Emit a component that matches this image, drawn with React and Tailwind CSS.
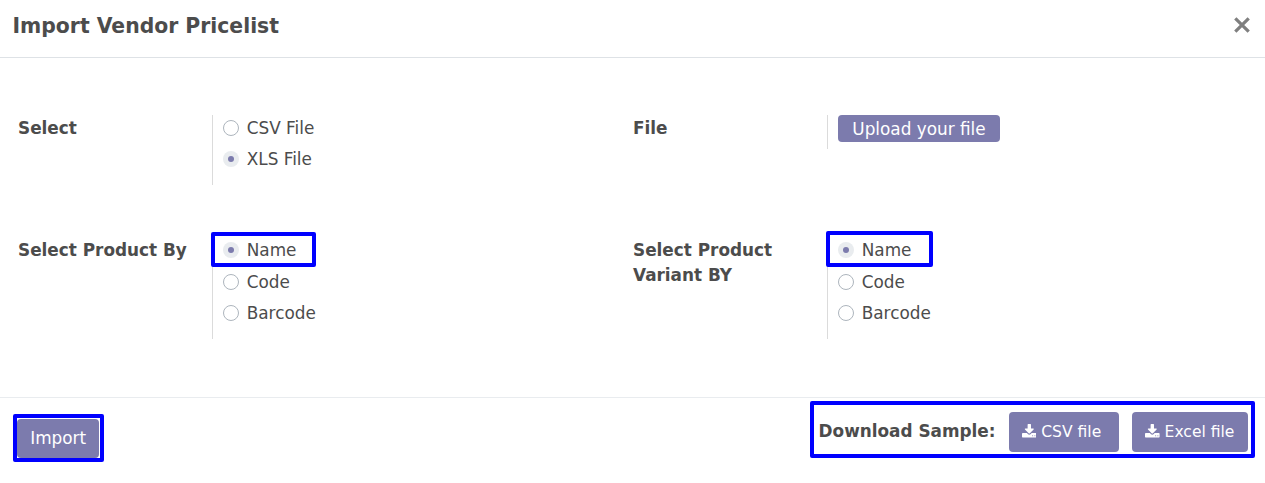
import React from "react";

function DownloadIcon() {
  return (
    <svg viewBox="0 0 1664 1536" className="-mt-[4px] h-[13.5px] w-[14.6px] shrink-0 fill-white">
      <path d="M1280 1344q0-26-19-45t-45-19-45 19-19 45 19 45 45 19 45-19 19-45zm256 0q0-26-19-45t-45-19-45 19-19 45 19 45 45 19 45-19 19-45zm128-224v320q0 40-28 68t-68 28h-1472q-40 0-68-28t-28-68v-320q0-40 28-68t68-28h465l135 136q58 56 136 56t136-56l136-136h464q40 0 68 28t28 68zm-325-569q17 41-14 70l-448 448q-18 19-45 19t-45-19l-448-448q-31-29-14-70 17-39 59-39h256v-448q0-26 19-45t45-19h256q26 0 45 19t19 45v448h256q42 0 59 39z" />
    </svg>
  );
}

function Radio({ checked }) {
  return checked ? (
    <span className="flex size-4 shrink-0 items-center justify-center rounded-full bg-[#e9ecef]">
      <span className="size-[6px] rounded-full bg-[#7c7bad]" />
    </span>
  ) : (
    <span className="block size-4 shrink-0 rounded-full border border-[#adb5bd] bg-white" />
  );
}

function RadioGroup({ options, selected, highlight }) {
  return (
    <div className="relative border-l border-[#dbdbdb] pb-[7px] pl-[10px]">
      {options.map((option) => (
        <div key={option} className="flex h-[31.5px] items-start gap-[7.7px]">
          <span className={highlight ? "pt-[5px]" : "pt-[4.7px]"}>
            <Radio checked={option === selected} />
          </span>
          <span className={highlight ? "pt-[1.1px] leading-[25px]" : "pt-[0.6px] leading-[25px]"}>{option}</span>
        </div>
      ))}
      {highlight && <div className={`absolute rounded-[2px] border-4 border-[#0000ff] ${highlight}`} />}
    </div>
  );
}

function Field({ label, children }) {
  return (
    <div className="flex w-[615px] items-start">
      <div className="w-[194px] shrink-0 pt-px pr-5 leading-[25px] font-bold">{label}</div>
      {children}
    </div>
  );
}

const products = ["Name", "Code", "Barcode"];

export default function App() {
  return (
    <div className="flex h-[483px] w-[1265px] flex-col overflow-hidden bg-white font-['DejaVu_Sans',sans-serif] text-[16.87px] text-[#4c4c4c]">
      <header className="flex h-[58px] items-start justify-between border-b border-[#dee2e6] pt-[10px] pr-[15px] pl-[12.5px]">
        <h1 className="pt-px text-[20.37px] leading-[30px] font-bold">Import Vendor Pricelist</h1>
        <svg viewBox="0 0 16 16" className="mt-[7px] size-4 stroke-[#7f7f7f]" strokeWidth="3.2" fill="none">
          <path d="M1.3 1.3 14.7 14.7M14.7 1.3 1.3 14.7" />
        </svg>
      </header>

      <main className="flex h-[339px] flex-col pt-[57px] pl-[18px]">
        <div className="flex h-[122px]">
          <Field label="Select">
            <RadioGroup options={["CSV File", "XLS File"]} selected="XLS File" />
          </Field>
          <Field label="File">
            <div className="h-[34px] border-l border-[#dbdbdb] pl-[10px]">
              <button className="h-[27px] w-[162px] rounded-[4px] bg-[#7c7bad] pt-px leading-[26px] text-white">Upload your file</button>
            </div>
          </Field>
        </div>
        <div className="flex">
          <Field label="Select Product By">
            <RadioGroup options={products} selected="Name" highlight="-top-[5px] -left-[2px] h-[35px] w-[105px]" />
          </Field>
          <Field label="Select Product Variant BY">
            <RadioGroup options={products} selected="Name" highlight="-top-[6px] -left-[2px] h-[36px] w-[107px]" />
          </Field>
        </div>
      </main>

      <footer className="flex items-start justify-between border-t border-[#e9ecef] pt-[3px] pr-[10px] pl-[13px]">
        <div className="mt-[13px] h-[48px] w-[91px] rounded-[2px] border-4 border-[#0000ff] pt-[0.5px] pl-[0.4px]">
          <button className="block h-[39.5px] w-[81.6px] rounded-[4px] bg-[#7c7bad] pt-px text-white">Import</button>
        </div>
        <div className="flex h-[57px] w-[445px] items-start rounded-[2px] border-4 border-[#0000ff] pt-[7px] pl-[4.6px]">
          <span className="w-[190.4px] leading-[38px] font-bold">Download Sample:</span>
          <button className="flex h-10 w-[110px] items-center gap-[5px] rounded-[4px] bg-[#7c7bad] pt-[1.5px] pl-[12.7px] text-[15.55px] text-white">
            <DownloadIcon />
            CSV file
          </button>
          <button className="ml-[13px] flex h-10 w-[116px] items-center gap-[5px] rounded-[4px] bg-[#7c7bad] pt-[1.5px] pl-[13px] text-[15.55px] text-white">
            <DownloadIcon />
            Excel file
          </button>
        </div>
      </footer>
    </div>
  );
}
